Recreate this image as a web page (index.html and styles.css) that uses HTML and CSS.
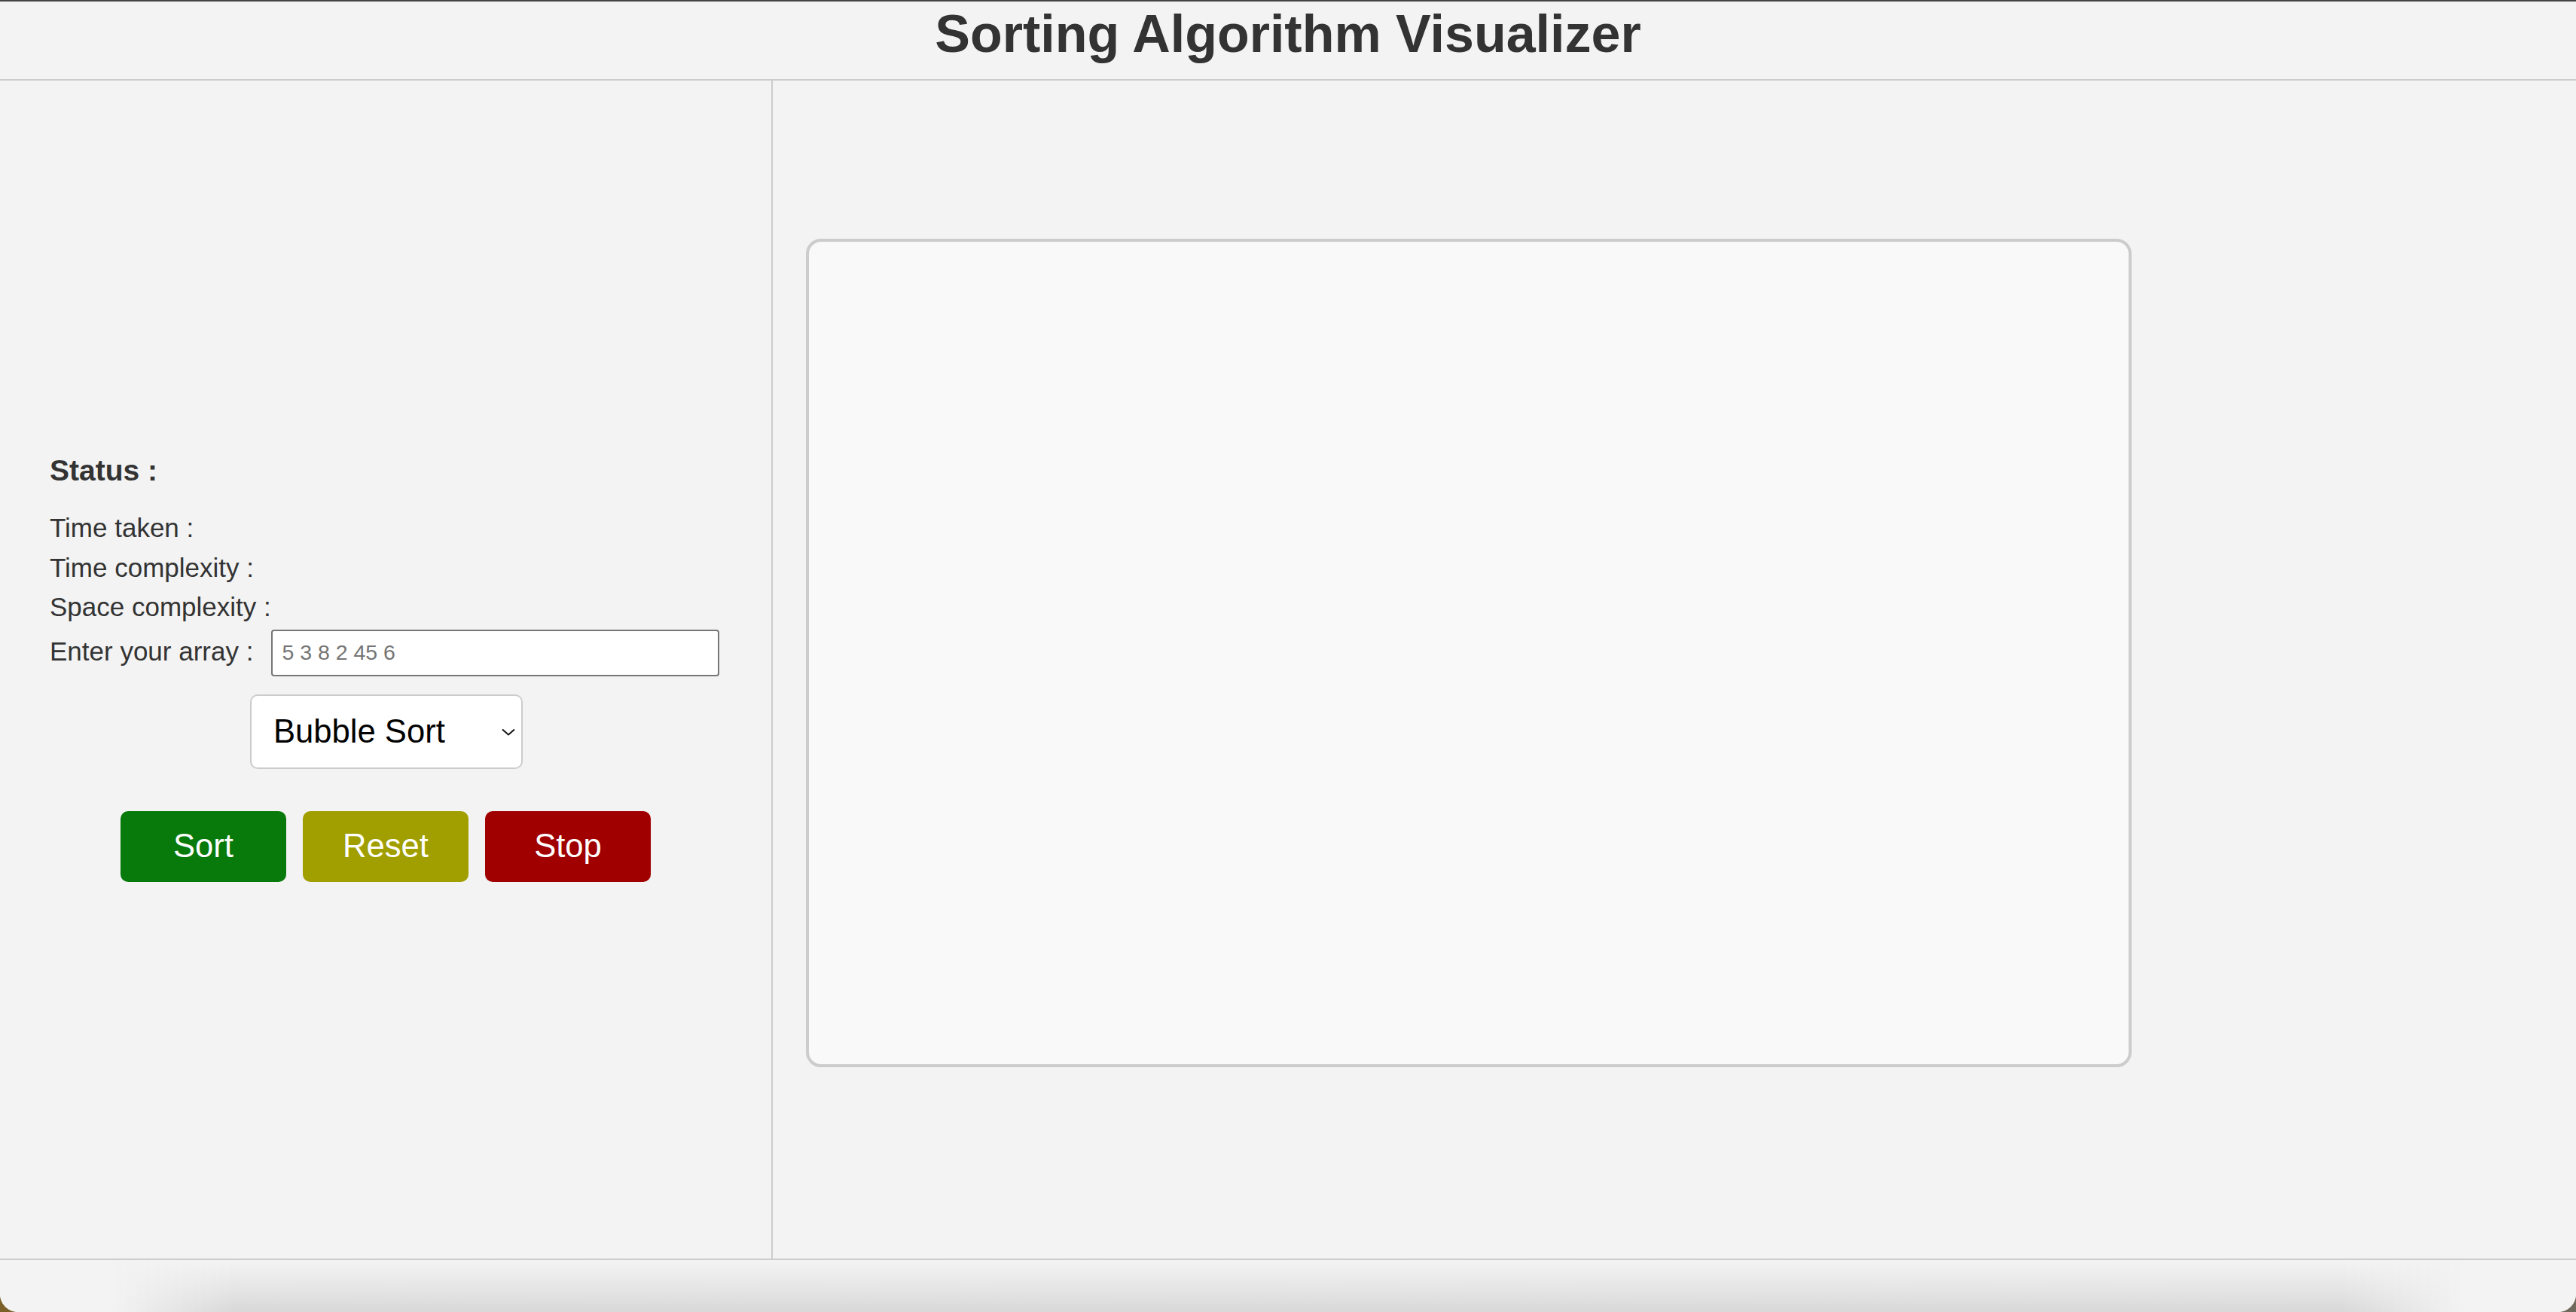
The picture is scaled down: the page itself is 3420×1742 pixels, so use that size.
FILE: index.html
```html
<!DOCTYPE html>
<html lang="en">
<head>
<meta charset="utf-8">
<title>Sorting Algorithm Visualizer</title>
<link rel="stylesheet" href="styles.css">
</head>
<body>
<div class="window">
  <header class="header">
    <h1 class="title">Sorting Algorithm Visualizer</h1>
  </header>
  <main class="main">
    <section class="controls">
      <h3 class="status">Status :</h3>
      <div class="line">Time taken :</div>
      <div class="line">Time complexity :</div>
      <div class="line">Space complexity :</div>
      <div class="array-row">
        <label class="line" for="arr">Enter your array :</label>
        <input id="arr" class="array-input" type="text" placeholder="5 3 8 2 45 6">
      </div>
      <div class="select-wrap">
        <select class="algo">
          <option>Bubble Sort</option>
          <option>Selection Sort</option>
          <option>Insertion Sort</option>
          <option>Merge Sort</option>
          <option>Quick Sort</option>
        </select>
        <svg class="chev" width="18" height="10" viewBox="0 0 18 10"><path d="M1 1.5 L9 8.5 L17 1.5" fill="none" stroke="#111" stroke-width="2"/></svg>
      </div>
      <div class="buttons">
        <button class="btn btn-sort">Sort</button>
        <button class="btn btn-reset">Reset</button>
        <button class="btn btn-stop">Stop</button>
      </div>
    </section>
    <section class="stage">
      <div class="canvas"></div>
    </section>
  </main>
  <footer class="footer"><div class="shade"></div></footer>
</div>
</body>
</html>
```
FILE: styles.css
```css
html {
  margin: 0;
  height: 100%;
  background: linear-gradient(to right, #7b6128 0%, #6f6a5c 100%);
}
body {
  margin: 0;
  height: 1742px;
  overflow: hidden;
  font-family: "Liberation Sans", Arial, sans-serif;
  color: #333;
}
.window {
  height: 1742px;
  background: #f3f3f3;
  border-radius: 0 0 24px 24px;
  overflow: hidden;
  display: flex;
  flex-direction: column;
}
.header {
  border-top: 2px solid #444;
  border-bottom: 2px solid #ccc;
  height: 103px;
  box-sizing: content-box;
}
.title {
  margin: 0;
  padding-top: 3px;
  text-align: center;
  font-size: 70px;
  line-height: 80px;
  font-weight: bold;
  color: #333;
}
.main {
  height: 1564px;
  display: flex;
  border-bottom: 2px solid #ccc;
}
.controls {
  width: 1026px;
  flex: none;
  box-sizing: border-box;
  border-right: 2px solid #ccc;
  display: flex;
  flex-direction: column;
  justify-content: center;
  padding: 0 0 5px 66px;
}
.status {
  margin: 0 0 28px 0;
  font-size: 39px;
  font-weight: bold;
  line-height: 45px;
}
.line {
  font-size: 35px;
  line-height: 52.5px;
}
.array-row {
  display: flex;
  align-items: center;
  margin-top: 3px;
  height: 62px;
}
.array-row .line {
  margin-top: -4px;
}
.array-input {
  margin-left: 24px;
  width: 595px;
  height: 62px;
  box-sizing: border-box;
  border: 2px solid #767676;
  border-radius: 4px;
  background: #fff;
  padding: 0 12px;
  font-family: "Liberation Sans", Arial, sans-serif;
  font-size: 28.5px;
  color: #333;
}
.array-input::placeholder {
  color: #757575;
}
.select-wrap {
  position: relative;
  align-self: flex-start;
  margin: 24px 0 0 266px;
  width: 362px;
  height: 99px;
}
.algo {
  appearance: none;
  -webkit-appearance: none;
  width: 362px;
  height: 99px;
  box-sizing: border-box;
  border: 2px solid #ccc;
  border-radius: 10px;
  background: #fff;
  padding: 0 0 0 29px;
  font-family: "Liberation Sans", Arial, sans-serif;
  font-size: 43.6px;
  color: #000;
}
.chev {
  position: absolute;
  right: 10px;
  top: 45px;
  pointer-events: none;
}
.buttons {
  display: flex;
  gap: 22px;
  margin: 56px 0 0 94px;
}
.btn {
  width: 220px;
  height: 94px;
  border: none;
  border-radius: 10px;
  color: #fff;
  font-family: "Liberation Sans", Arial, sans-serif;
  font-size: 43.6px;
  padding: 0;
}
.btn-sort { background: #08790b; }
.btn-reset { background: #a19e00; }
.btn-stop { background: #a00000; }
.stage {
  flex: 1;
  display: flex;
  align-items: center;
  padding: 0 0 44px 44px;
}
.canvas {
  width: 1760px;
  height: 1100px;
  box-sizing: border-box;
  border: 4px solid #ccc;
  border-radius: 20px;
  background: #f9f9f9;
}
.footer {
  flex: 1;
  background: #f3f3f3;
  display: flex;
}
.shade {
  flex: 1;
  margin: 0 150px;
  background: linear-gradient(to bottom, #f3f3f3 0%, #e4e4e4 60%, #d8d8d8 100%);
  -webkit-mask-image: linear-gradient(to right, transparent 0, #000 160px, #000 calc(100% - 160px), transparent 100%);
  mask-image: linear-gradient(to right, transparent 0, #000 160px, #000 calc(100% - 160px), transparent 100%);
}
```
